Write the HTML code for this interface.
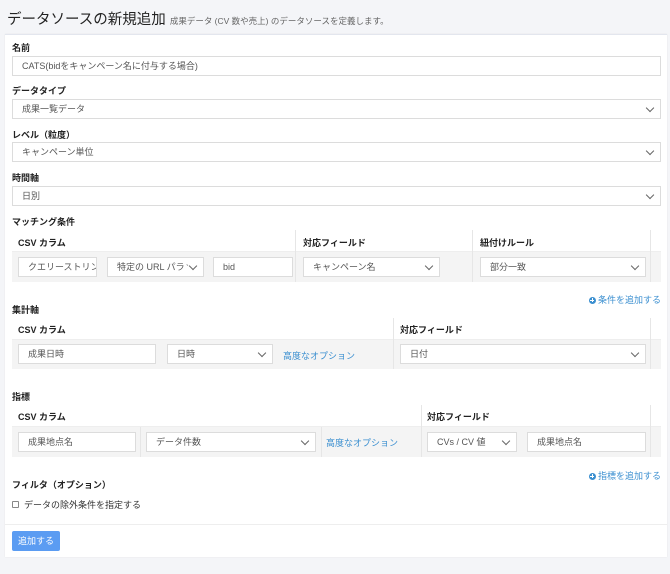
<!DOCTYPE html>
<html><head><meta charset="utf-8"><style>
*{box-sizing:border-box;margin:0;padding:0}
body{width:670px;height:574px;background:#f4f5f8;font-family:"Liberation Sans","Noto Sans CJK JP",sans-serif;font-size:9px;color:#333;position:relative;overflow:hidden}
.a{position:absolute}
.card{position:absolute;left:5px;top:34px;width:662px;height:523px;background:#fff;border-top:1px solid #e3e6ee;box-shadow:0 0 1px #e0e0e0}
.lbl{position:absolute;font-weight:bold;font-size:9px;color:#222}
.in{position:absolute;height:20px;border:1px solid #dcdcdc;background:#fff;padding-left:9px;line-height:18px;color:#555;font-size:9px;white-space:nowrap;overflow:hidden}
.sel{padding-right:20px}
.sel::after{content:"";position:absolute;right:7px;top:5px;width:5px;height:5px;border-right:1px solid #666;border-bottom:1px solid #666;transform:rotate(45deg);background:#fff;box-shadow:3px 3px 0 4px #fff}
.th{position:absolute;background:#fff;border-bottom:1px solid #eee}
.tr{position:absolute;background:#f4f4f4}
.vs{position:absolute;width:1px;background:#e6e6e6}
.lnk{position:absolute;color:#3b8fd0;font-size:9px;white-space:nowrap}
.plus{display:inline-block;width:7px;height:7px;border-radius:50%;background:#3b8fd0;margin-right:2px;position:relative;vertical-align:-0.5px}
.plus::before{content:"";position:absolute;left:1.5px;top:3px;width:4px;height:1px;background:#fff}
.plus::after{content:"";position:absolute;left:3px;top:1.5px;width:1px;height:4px;background:#fff}
</style></head><body>
<div class="a" style="left:7px;top:8px;font-size:14.5px;color:#222;white-space:nowrap">データソースの新規追加 <span style="font-size:8.5px;color:#666">成果データ (CV 数や売上) のデータソースを定義します。</span></div>
<div class="card"></div>

<div class="lbl" style="left:12px;top:41px">名前</div>
<div class="in" style="left:12px;top:56px;width:649px">CATS(bidをキャンペーン名に付与する場合)</div>
<div class="lbl" style="left:12px;top:84px">データタイプ</div>
<div class="in sel" style="left:12px;top:99px;width:649px">成果一覧データ</div>
<div class="lbl" style="left:12px;top:128px">レベル（粒度）</div>
<div class="in sel" style="left:12px;top:142px;width:649px">キャンペーン単位</div>
<div class="lbl" style="left:12px;top:171px">時間軸</div>
<div class="in sel" style="left:12px;top:186px;width:649px">日別</div>
<div class="lbl" style="left:12px;top:215px">マッチング条件</div>

<div class="th" style="left:12px;top:230px;width:649px;height:22px"></div>
<div class="tr" style="left:12px;top:252px;width:649px;height:30px"></div>
<div class="vs" style="left:295px;top:230px;height:52px"></div>
<div class="vs" style="left:472px;top:230px;height:52px"></div>
<div class="vs" style="left:650px;top:230px;height:52px"></div>
<div class="lbl" style="left:18px;top:236px">CSV カラム</div>
<div class="lbl" style="left:303px;top:236px">対応フィールド</div>
<div class="lbl" style="left:480px;top:236px">紐付けルール</div>
<div class="in" style="left:18px;top:257px;width:79px">クエリーストリン</div>
<div class="in sel" style="left:107px;top:257px;width:97px">特定の URL パラメ</div>
<div class="in" style="left:213px;top:257px;width:80px">bid</div>
<div class="in sel" style="left:303px;top:257px;width:137px">キャンペーン名</div>
<div class="in sel" style="left:480px;top:257px;width:166px">部分一致</div>
<div class="lnk" style="right:9px;top:293px"><span class="plus"></span>条件を追加する</div>

<div class="lbl" style="left:12px;top:303px">集計軸</div>
<div class="th" style="left:12px;top:318px;width:649px;height:22px"></div>
<div class="tr" style="left:12px;top:340px;width:649px;height:29px"></div>
<div class="vs" style="left:393px;top:318px;height:51px"></div>
<div class="vs" style="left:650px;top:318px;height:51px"></div>
<div class="lbl" style="left:18px;top:323px">CSV カラム</div>
<div class="lbl" style="left:400px;top:323px">対応フィールド</div>
<div class="in" style="left:18px;top:344px;width:138px">成果日時</div>
<div class="in sel" style="left:167px;top:344px;width:106px">日時</div>
<div class="lnk" style="left:283px;top:349px">高度なオプション</div>
<div class="in sel" style="left:400px;top:344px;width:246px">日付</div>

<div class="lbl" style="left:12px;top:390px">指標</div>
<div class="th" style="left:12px;top:405px;width:649px;height:22px"></div>
<div class="tr" style="left:12px;top:427px;width:649px;height:30px"></div>
<div class="vs" style="left:140px;top:427px;height:30px"></div>
<div class="vs" style="left:321px;top:427px;height:30px"></div>
<div class="vs" style="left:421px;top:405px;height:52px"></div>
<div class="vs" style="left:650px;top:405px;height:52px"></div>
<div class="lbl" style="left:18px;top:410px">CSV カラム</div>
<div class="lbl" style="left:427px;top:410px">対応フィールド</div>
<div class="in" style="left:18px;top:432px;width:118px">成果地点名</div>
<div class="in sel" style="left:146px;top:432px;width:170px">データ件数</div>
<div class="lnk" style="left:326px;top:436px">高度なオプション</div>
<div class="in sel" style="left:427px;top:432px;width:90px">CVs / CV 値</div>
<div class="in" style="left:527px;top:432px;width:119px">成果地点名</div>
<div class="lnk" style="right:9px;top:469px"><span class="plus"></span>指標を追加する</div>

<div class="lbl" style="left:12px;top:478px">フィルタ（オプション）</div>
<div class="a" style="left:12px;top:501px;width:7px;height:7px;border:1px solid #888;border-radius:1px"></div>
<div class="a" style="left:24px;top:498px;color:#333">データの除外条件を指定する</div>
<div class="a" style="left:5px;top:524px;width:662px;height:1px;background:#eee"></div>
<div class="a" style="left:12px;top:531px;width:48px;height:20px;background:#5b9cf2;border-radius:2px;color:#fff;text-align:center;line-height:20px">追加する</div>
</body></html>
